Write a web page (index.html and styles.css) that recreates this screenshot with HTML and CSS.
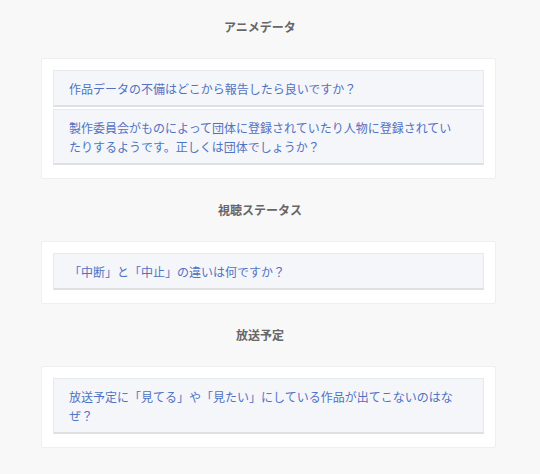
FILE: index.html
```html
<!DOCTYPE html>
<html lang="ja">
<head>
  <meta charset="UTF-8">
  <meta name="viewport" content="width=device-width, initial-scale=1.0">
  <title>よくある質問</title>
  <link rel="stylesheet" href="styles.css">
</head>
<body>
  <div class="faq">
    <section class="faq-section">
      <h2 class="faq-title">アニメデータ</h2>
      <div class="faq-card">
        <a class="faq-item" href="#">作品データの不備はどこから報告したら良いですか？</a>
        <a class="faq-item" href="#">製作委員会がものによって団体に登録されていたり人物に登録されていたりするようです。正しくは団体でしょうか？</a>
      </div>
    </section>

    <section class="faq-section">
      <h2 class="faq-title">視聴ステータス</h2>
      <div class="faq-card">
        <a class="faq-item" href="#">「中断」と「中止」の違いは何ですか？</a>
      </div>
    </section>

    <section class="faq-section">
      <h2 class="faq-title">放送予定</h2>
      <div class="faq-card">
        <a class="faq-item" href="#">放送予定に「見てる」や「見たい」にしている作品が出てこないのはなぜ？</a>
      </div>
    </section>
  </div>
</body>
</html>
```

FILE: styles.css
```css
body {
  margin: 0;
  background-color: #f8f8f9;
  font-family: "Noto Sans CJK JP", "Noto Sans", sans-serif;
}

.faq {
  width: 520px;
  padding-top: 17px;
}

.faq-section {
  margin-bottom: 21px;
}

.faq-title {
  margin: 0 0 21px;
  font-size: 12px;
  line-height: 20px;
  font-weight: bold;
  color: #666;
  text-align: center;
}

.faq-card {
  margin-left: 41px;
  width: 455px;
  box-sizing: border-box;
  background: #fff;
  border: 1px solid #efeff1;
  border-radius: 2px;
  padding: 11px 11px 13px;
  display: flex;
  flex-direction: column;
  gap: 2px;
}

.faq-item {
  display: block;
  background: #f5f6f9;
  border: 1px solid #e8e9ec;
  border-bottom: 2px solid #dfe0e4;
  padding: 8px 25px 7px 15px;
  font-size: 12px;
  line-height: 19px;
  color: #4f72c4;
  text-decoration: none;
}

.faq-item:hover {
  background: #eef0f6;
}
```
